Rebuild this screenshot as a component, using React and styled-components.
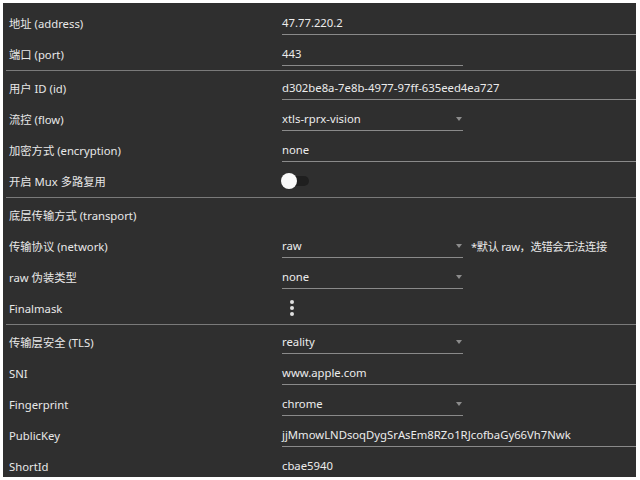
import React from 'react';
import styled, { createGlobalStyle } from 'styled-components';

const GlobalStyle = createGlobalStyle`
  html, body {
    margin: 0;
    padding: 0;
    background: #ffffff;
  }
  body {
    font-family: "Noto Sans", "Noto Sans CJK SC", sans-serif;
    font-size: 11.3px;
  }
`;

const Panel = styled.div`
  margin: 3px;
  width: 633px;
  height: 474px;
  box-sizing: border-box;
  padding-top: 4px;
  background: #2f2f2f;
  color: #e8e8e8;
  overflow: hidden;
`;

const Section = styled.div`
  display: flex;
  flex-direction: column;
`;

const Divider = styled.div`
  height: 1px;
  margin: 1px 0 1px 3px;
  background: #7a7a7a;
`;

const Row = styled.div`
  display: grid;
  grid-template-columns: 273px 1fr;
  align-items: start;
  height: 31px;
  padding-left: 6px;
`;

const Label = styled.div`
  height: 28px;
  padding-top: 4px;
  box-sizing: border-box;
  display: flex;
  align-items: center;
  white-space: nowrap;
`;

const Value = styled.div`
  display: flex;
  align-items: flex-start;
  min-width: 0;
`;

const Field = styled.div`
  position: relative;
  width: ${(p) => (p.$wide ? 'auto' : '181px')};
  flex: ${(p) => (p.$wide ? '1' : 'none')};
  height: 28px;
  padding-top: 4px;
  box-sizing: border-box;
  display: flex;
  align-items: center;
  border-bottom: 1px solid #8a8a8a;
  color: #ececec;
  white-space: nowrap;
`;

const Arrow = styled.span`
  position: absolute;
  right: 1px;
  top: 50%;
  width: 0;
  height: 0;
  border-left: 3px solid transparent;
  border-right: 3px solid transparent;
  border-top: 4px solid #8c8c8c;
`;

const Hint = styled.div`
  height: 28px;
  padding: 4px 0 0 8px;
  box-sizing: border-box;
  display: flex;
  align-items: center;
  white-space: nowrap;
  color: #e8e8e8;
  letter-spacing: -0.4px;
`;

const Switch = styled.div`
  position: relative;
  width: 30px;
  height: 31px;
  margin-left: -1px;
`;

const Track = styled.div`
  position: absolute;
  left: 2px;
  top: 11px;
  width: 26px;
  height: 10px;
  border-radius: 5px;
  background: #1f1f1f;
`;

const Knob = styled.div`
  position: absolute;
  left: 0;
  top: 8px;
  width: 16px;
  height: 16px;
  border-radius: 50%;
  background: #fafafa;
`;

const MenuButton = styled.div`
  height: 31px;
  display: flex;
  align-items: center;
  padding-left: 4px;
  color: #e0e0e0;
`;

const Select = ({ value, wide }) => (
  <Field $wide={wide}>
    {value}
    <Arrow />
  </Field>
);

const KebabIcon = () => (
  <svg width="12" height="24" viewBox="0 0 12 24" fill="currentColor">
    <circle cx="6" cy="6" r="2" />
    <circle cx="6" cy="12" r="2" />
    <circle cx="6" cy="18" r="2" />
  </svg>
);

const App = () => (
  <>
    <GlobalStyle />
    <Panel>
      <Section>
        <Row>
          <Label>地址 (address)</Label>
          <Value><Field $wide>47.77.220.2</Field></Value>
        </Row>
        <Row>
          <Label>端口 (port)</Label>
          <Value><Field>443</Field></Value>
        </Row>
      </Section>
      <Divider />
      <Section>
        <Row>
          <Label>用户 ID (id)</Label>
          <Value><Field $wide>d302be8a-7e8b-4977-97ff-635eed4ea727</Field></Value>
        </Row>
        <Row>
          <Label>流控 (flow)</Label>
          <Value><Select value="xtls-rprx-vision" /></Value>
        </Row>
        <Row>
          <Label>加密方式 (encryption)</Label>
          <Value><Field $wide>none</Field></Value>
        </Row>
        <Row>
          <Label>开启 Mux 多路复用</Label>
          <Value>
            <Switch>
              <Track />
              <Knob />
            </Switch>
          </Value>
        </Row>
      </Section>
      <Divider />
      <Section>
        <Row>
          <Label>底层传输方式 (transport)</Label>
        </Row>
        <Row>
          <Label>传输协议 (network)</Label>
          <Value>
            <Select value="raw" />
            <Hint>*默认 raw，选错会无法连接</Hint>
          </Value>
        </Row>
        <Row>
          <Label>raw 伪装类型</Label>
          <Value><Select value="none" /></Value>
        </Row>
        <Row>
          <Label>Finalmask</Label>
          <Value>
            <MenuButton><KebabIcon /></MenuButton>
          </Value>
        </Row>
      </Section>
      <Divider />
      <Section>
        <Row>
          <Label>传输层安全 (TLS)</Label>
          <Value><Select value="reality" /></Value>
        </Row>
        <Row>
          <Label>SNI</Label>
          <Value><Field $wide>www.apple.com</Field></Value>
        </Row>
        <Row>
          <Label>Fingerprint</Label>
          <Value><Select value="chrome" /></Value>
        </Row>
        <Row>
          <Label>PublicKey</Label>
          <Value><Field $wide>jjMmowLNDsoqDygSrAsEm8RZo1RJcofbaGy66Vh7Nwk</Field></Value>
        </Row>
        <Row>
          <Label>ShortId</Label>
          <Value><Field>cbae5940</Field></Value>
        </Row>
      </Section>
    </Panel>
  </>
);

export default App;
